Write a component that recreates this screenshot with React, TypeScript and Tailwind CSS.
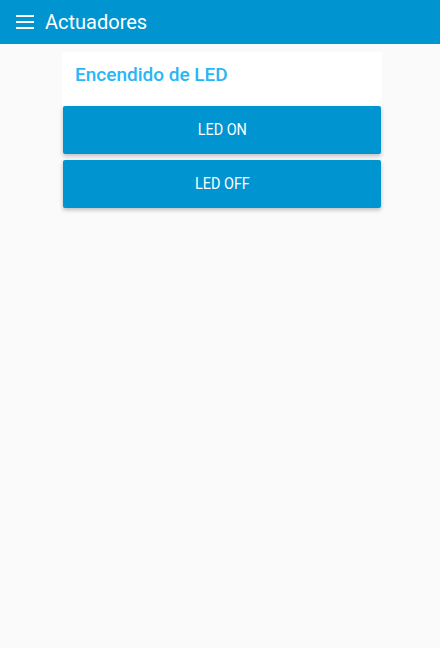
import React from "react";

export default function App() {
  return (
    <div className="min-h-[648px] w-[440px] bg-[#fafafa]" style={{ fontFamily: "Roboto, 'Noto Sans', sans-serif" }}>
      <header className="flex h-[44px] items-center bg-[#0095d0] text-white">
        <div className="ml-[16px] flex w-[18px] flex-col gap-[4px]">
          <span className="block h-[2px] w-[18px] bg-white" />
          <span className="block h-[2px] w-[18px] bg-white" />
          <span className="block h-[2px] w-[18px] bg-white" />
        </div>
        <h1 className="ml-[11px] text-[20px] leading-none">Actuadores</h1>
      </header>
      <main className="flex pt-[8px] pl-[62px]">
        <div className="flex w-[320px] flex-col">
          <div className="flex h-[54px] items-start bg-white px-[13px] pt-[11px]">
            <h2 className="text-[19px] font-medium leading-[24px] text-[#29b6f6]">Encendido de LED</h2>
          </div>
          <div className="flex flex-col gap-[6px] px-[1px]">
            <button className="h-[48px] rounded-[2px] bg-[#0095d0] text-[16px] font-normal text-white shadow-[0_2px_4px_rgba(0,0,0,0.25)]">
              <span className="inline-block scale-x-[0.9]">LED ON</span>
            </button>
            <button className="h-[48px] rounded-[2px] bg-[#0095d0] text-[16px] font-normal text-white shadow-[0_2px_4px_rgba(0,0,0,0.25)]">
              <span className="inline-block scale-x-[0.9]">LED OFF</span>
            </button>
          </div>
        </div>
      </main>
    </div>
  );
}
